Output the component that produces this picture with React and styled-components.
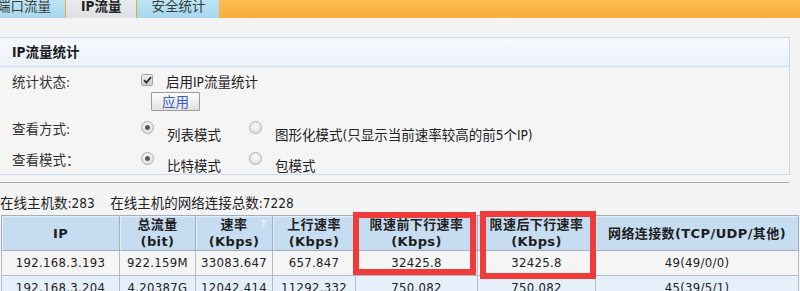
import React from 'react'
import styled, { createGlobalStyle } from 'styled-components'

const GlobalStyle = createGlobalStyle`
  html, body {
    margin: 0;
    padding: 0;
    background: #f4f4f4;
    font-family: "DejaVu Sans Condensed", "Noto Sans CJK SC", sans-serif;
    font-size: 13.5px;
    color: #222;
    overflow: hidden;
  }
`

const Page = styled.div`
  width: 800px;
  height: 291px;
  overflow: hidden;
`

const TabBar = styled.div`
  display: flex;
  height: 18px;
  overflow: hidden;
  background: linear-gradient(to bottom, #fbbd55 0%, #f9b547 45%, #f8af3a 100%);
`

const Tab = styled.div`
  height: 18px;
  padding: 0 ${p => (p.$active ? 15 : 14)}px;
  line-height: 12px;
  white-space: nowrap;
  font-size: 13.5px;
  font-weight: ${p => (p.$active ? 'bold' : 'normal')};
  color: ${p => (p.$active ? '#222' : '#3c3c3c')};
  background: ${p =>
    p.$active
      ? 'linear-gradient(to bottom, #e9ebed, #dde0e3)'
      : 'linear-gradient(to bottom, #bde5f5, #a6d8ef)'};
  border-left: ${p => (p.$active ? '1px solid #f2a533' : 'none')};
  border-right: ${p => (p.$active ? '1px solid #f2a533' : 'none')};
  margin-left: ${p => p.$shift || 0}px;
`

const Panel = styled.div`
  margin: 19px 0 0 -1px;
  width: 789px;
  border: 1px solid #c6dbee;
  background: #f5f5f5;
`

const PanelHeader = styled.div`
  height: 28px;
  line-height: 28px;
  padding-left: 12px;
  font-weight: bold;
  font-size: 13.5px;
  color: #1a1a1a;
  border-bottom: 1px solid #c6dbee;
  background: linear-gradient(to bottom, #f7f9fc, #eaf1f9);
`

const PanelBody = styled.div`
  padding: 7px 0 0 12px;
`

const FormRow = styled.div`
  display: flex;
  align-items: flex-start;
  margin-top: ${p => p.$top || 0}px;
`

const Label = styled.div`
  width: 129px;
  line-height: 16px;
  color: #333;
`

const Option = styled.label`
  display: flex;
  align-items: flex-start;
  width: ${p => (p.$width ? `${p.$width}px` : 'auto')};
`

const OptionText = styled.span`
  margin-left: 13px;
  line-height: 16px;
  padding-top: ${p => p.$drop || 0}px;
  color: #222;
  white-space: nowrap;
`

const CheckBox = styled.span`
  display: inline-flex;
  align-items: center;
  justify-content: center;
  box-sizing: border-box;
  width: 12px;
  height: 12px;
  border: 1px solid #a4a4a4;
  border-radius: 2px;
  background: linear-gradient(to bottom, #f2f2f2, #cfcfcf);
`

const Radio = styled.span`
  position: relative;
  box-sizing: border-box;
  width: 13px;
  height: 13px;
  border-radius: 50%;
  border: 1px solid #b0b0b0;
  background: radial-gradient(circle at 50% 40%, #ffffff 0%, #e8e8e8 55%, #cfcfcf 100%);
  flex-shrink: 0;
  &::after {
    content: '';
    display: ${p => (p.$checked ? 'block' : 'none')};
    position: absolute;
    left: 3px;
    top: 3px;
    width: 5px;
    height: 5px;
    border-radius: 50%;
    background: #5a5a5a;
  }
`

const ApplyButton = styled.button`
  display: block;
  margin: 2px 0 0 139px;
  width: 49px;
  height: 19px;
  padding: 0;
  border: 1px solid #9c9c9c;
  border-radius: 1px;
  background: linear-gradient(to bottom, #fdfdfd, #e2e2e2);
  color: #3a5ccc;
  font-family: inherit;
  font-size: 13.5px;
  line-height: 16px;
`

const Rule = styled.div`
  margin-top: 7px;
  width: 789px;
  height: 1px;
  background: #a9a9a9;
`

const Summary = styled.div`
  margin-top: 12px;
  line-height: 16px;
  white-space: pre;
  color: #222;
`

const TableWrap = styled.div`
  position: relative;
  margin: 4px 0 0 1px;
`

const Table = styled.table`
  table-layout: fixed;
  width: 797px;
  border-collapse: collapse;
`

const Th = styled.th`
  position: relative;
  height: 34px;
  padding: 0;
  border: 1px solid #a3aebb;
  background: #c6dcf0;
  font-family: "DejaVu Sans", "Noto Sans CJK SC", sans-serif;
  font-size: 13px;
  letter-spacing: 0.4px;
  line-height: 17px;
  font-weight: bold;
  color: #1e1e1e;
  text-align: center;
  white-space: nowrap;
  box-shadow: inset 1px 1px 0 #e6f0fa;
`

const SortMark = styled.span`
  position: absolute;
  right: 4px;
  top: 3px;
  font-size: 10px;
  line-height: 10px;
  color: #ffffff;
  font-weight: normal;
`

const Td = styled.td`
  height: 24px;
  padding: 0;
  border: 1px solid #b3bcc6;
  background: ${p => (p.$alt ? '#e6f0fa' : '#f5f5f5')};
  text-align: center;
  font-size: 13px;
  line-height: 16px;
  letter-spacing: 0.3px;
  color: #222;
  white-space: nowrap;
`

const Mark = styled.div`
  position: absolute;
  box-sizing: border-box;
  left: ${p => p.$x}px;
  top: ${p => p.$y}px;
  width: ${p => p.$w}px;
  height: ${p => p.$h}px;
  border: 6px solid #f03b3b;
  pointer-events: none;
`

const columns = [118, 76, 77, 83, 122, 118, 203]

const headers = [
  ['IP'],
  ['总流量', '(bit)'],
  ['速率', '(Kbps)'],
  ['上行速率', '(Kbps)'],
  ['限速前下行速率', '(Kbps)'],
  ['限速后下行速率', '(Kbps)'],
  ['网络连接数(TCP/UDP/其他)'],
]

const rows = [
  ['192.168.3.193', '922.159M', '33083.647', '657.847', '32425.8', '32425.8', '49(49/0/0)'],
  ['192.168.3.204', '4.20387G', '12042.414', '11292.332', '750.082', '750.082', '45(39/5/1)'],
]

function Check() {
  return (
    <CheckBox>
      <svg width="9" height="8" viewBox="0 0 9 8">
        <path d="M1 4.2 L3.4 6.6 L8 1.2" fill="none" stroke="#2e2e2e" strokeWidth="1.8" />
      </svg>
    </CheckBox>
  )
}

export default function App() {
  return (
    <Page>
      <GlobalStyle />
      <TabBar>
        <Tab $shift={-17}>端口流量</Tab>
        <Tab $active>IP流量</Tab>
        <Tab>安全统计</Tab>
      </TabBar>

      <Panel>
        <PanelHeader>IP流量统计</PanelHeader>
        <PanelBody>
          <FormRow>
            <Label>统计状态:</Label>
            <Option>
              <Check />
              <OptionText>启用IP流量统计</OptionText>
            </Option>
          </FormRow>
          <ApplyButton>应用</ApplyButton>

          <FormRow $top={10}>
            <Label>查看方式:</Label>
            <Option $width={108}>
              <Radio $checked />
              <OptionText $drop={6}>列表模式</OptionText>
            </Option>
            <Option>
              <Radio />
              <OptionText $drop={6}>图形化模式(只显示当前速率较高的前5个IP)</OptionText>
            </Option>
          </FormRow>

          <FormRow $top={9}>
            <Label>查看模式：</Label>
            <Option $width={108}>
              <Radio $checked />
              <OptionText $drop={6}>比特模式</OptionText>
            </Option>
            <Option>
              <Radio />
              <OptionText $drop={6}>包模式</OptionText>
            </Option>
          </FormRow>
        </PanelBody>
      </Panel>

      <Rule />
      <Summary>在线主机数:283    在线主机的网络连接总数:7228</Summary>

      <TableWrap>
        <Table>
          <colgroup>
            {columns.map((w, i) => (
              <col key={i} style={{ width: w }} />
            ))}
          </colgroup>
          <thead>
            <tr>
              {headers.map((h, i) => (
                <Th key={i}>
                  {h.map((line, j) => (
                    <div key={j}>{line}</div>
                  ))}
                  {i === 2 && <SortMark>↑</SortMark>}
                </Th>
              ))}
            </tr>
          </thead>
          <tbody>
            {rows.map((r, i) => (
              <tr key={i}>
                {r.map((c, j) => (
                  <Td key={j} $alt={i % 2 === 1}>
                    {c}
                  </Td>
                ))}
              </tr>
            ))}
          </tbody>
        </Table>
        <Mark $x={352} $y={-3} $w={123} $h={63} />
        <Mark $x={479} $y={-4} $w={116} $h={68} />
      </TableWrap>
    </Page>
  )
}
